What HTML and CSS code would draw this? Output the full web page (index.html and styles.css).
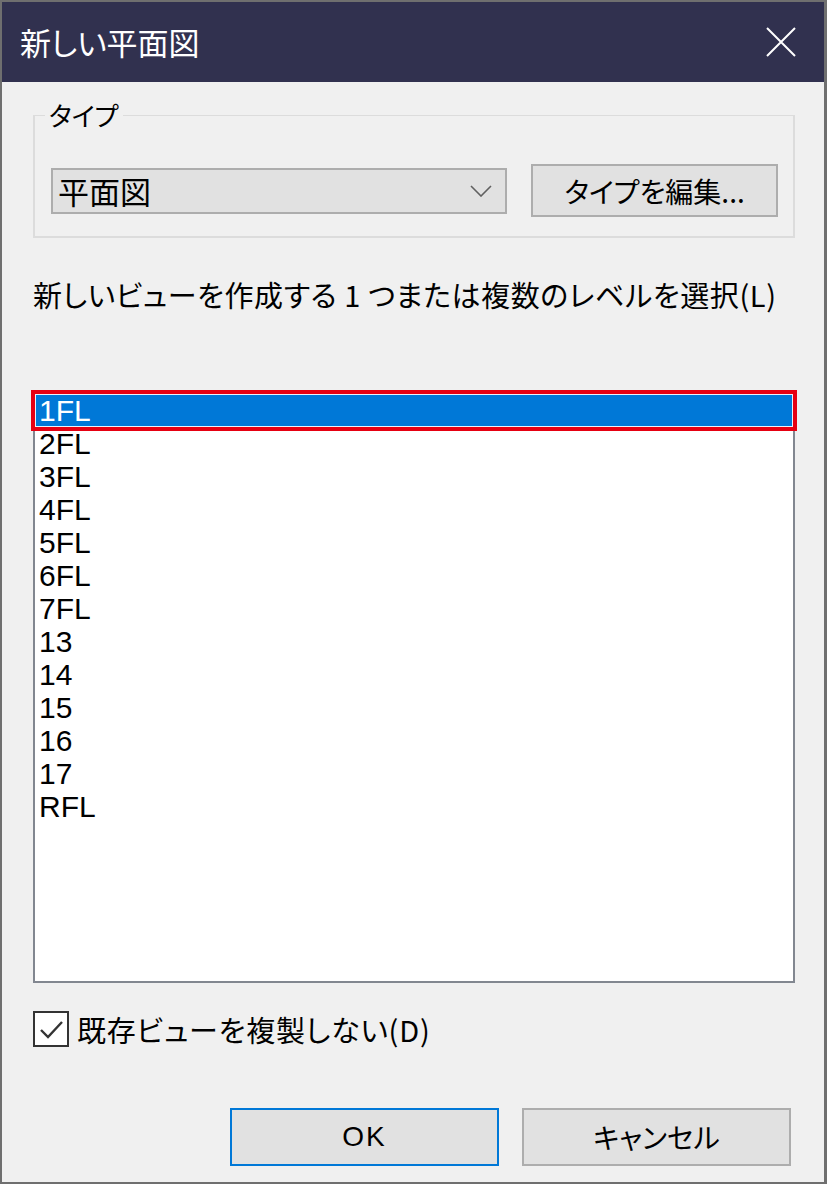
FILE: index.html
```html
<!DOCTYPE html>
<html lang="ja">
<head>
<meta charset="utf-8">
<title>新しい平面図</title>
<link rel="stylesheet" href="styles.css">
</head>
<body>
<div class="window">
  <div class="titlebar">
    <span class="title">新しい平面図</span>
    <svg class="close" width="30" height="30" viewBox="0 0 30 30"><path d="M1 1 L29 29 M29 1 L1 29" stroke="#ffffff" stroke-width="2" fill="none"/></svg>
  </div>
  <div class="content">
    <fieldset class="group">
      <legend class="legend">タイプ</legend>
      <div class="type-row">
        <div class="combo">
          <span class="combo-text">平面図</span>
          <svg class="chevron" width="22" height="12" viewBox="0 0 22 12"><path d="M1 1 L11 11 L21 1" stroke="#606060" stroke-width="1.6" fill="none"/></svg>
        </div>
        <div class="btn edit-btn">タイプを編集...</div>
      </div>
    </fieldset>
    <div class="label">新しいビューを作成する 1 つまたは複数のレベルを選択(L)</div>
    <div class="list">
      <div class="item selected">1FL</div>
      <div class="item">2FL</div>
      <div class="item">3FL</div>
      <div class="item">4FL</div>
      <div class="item">5FL</div>
      <div class="item">6FL</div>
      <div class="item">7FL</div>
      <div class="item">13</div>
      <div class="item">14</div>
      <div class="item">15</div>
      <div class="item">16</div>
      <div class="item">17</div>
      <div class="item">RFL</div>
    </div>
    <div class="check-row">
      <div class="checkbox">
        <svg width="32" height="32" viewBox="0 0 32 32"><path d="M6 17 L13 24 L27 9" stroke="#333333" stroke-width="2.4" fill="none"/></svg>
      </div>
      <span class="check-label">既存ビューを複製しない(D)</span>
    </div>
    <div class="buttons">
      <div class="btn action ok">OK</div>
      <div class="btn action">キャンセル</div>
    </div>
  </div>
</div>
</body>
</html>
```

FILE: styles.css
```css
html, body {
  margin: 0;
  padding: 0;
  background: #f0f0f0;
}
body {
  font-family: "Noto Sans CJK JP", "Liberation Sans", sans-serif;
  font-feature-settings: "palt";
  color: #000;
}
.window {
  width: 827px;
  height: 1184px;
  box-sizing: border-box;
  border: 2px solid #6f6f6f;
  border-right-width: 3px;
  background: #f0f0f0;
  display: flex;
  flex-direction: column;
}
.titlebar {
  height: 80px;
  flex: none;
  background: #31314f;
  display: flex;
  align-items: center;
  justify-content: space-between;
  padding: 0 28px 0 18px;
  color: #ffffff;
}
.title {
  font-size: 31px;
  line-height: 40px;
}
.close {
  display: block;
}
.content {
  padding: 0 29px 0 31px;
  display: flex;
  flex-direction: column;
}
.group {
  margin: 16px 0 0 0;
  padding: 0 15px 19px 16px;
  border: 2px solid #dcdcdc;
  border-top-width: 1px;
  min-width: 0;
}
.legend {
  margin-left: -6px;
  padding: 0 4px;
  font-size: 26px;
  line-height: 34px;
}
.type-row {
  margin-top: 32px;
  display: flex;
  align-items: center;
  gap: 24px;
}
.combo {
  width: 457px;
  height: 46px;
  box-sizing: border-box;
  border: 2px solid #adadad;
  background: #e1e1e1;
  display: flex;
  align-items: center;
  justify-content: space-between;
  padding: 0 13px 0 5px;
}
.combo-text {
  font-size: 31px;
  line-height: 40px;
}
.chevron {
  display: block;
}
.btn {
  box-sizing: border-box;
  border: 2px solid #adadad;
  background: #e1e1e1;
  display: flex;
  align-items: center;
  justify-content: center;
  font-size: 28px;
}
.edit-btn {
  width: 247px;
  height: 53px;
}
.label {
  margin-top: 36px;
  font-size: 29px;
  letter-spacing: 0.6px;
  line-height: 40px;
  white-space: nowrap;
}
.list {
  margin-top: 76px;
  height: 593px;
  box-sizing: border-box;
  border: 2px solid #828790;
  background: #ffffff;
  padding-top: 2px;
}
.item {
  height: 33px;
  line-height: 33px;
  padding-left: 4px;
  font-family: "Liberation Sans", "Noto Sans CJK JP", sans-serif;
  font-size: 30px;
  box-sizing: border-box;
}
.item.selected {
  background: #0078d7;
  color: #ffffff;
  border: 1px solid #e8f2fb;
  padding-left: 3px;
  line-height: 31px;
  outline: 4px solid #e60012;
  outline-offset: 0;
}
.check-row {
  margin-top: 26px;
  display: flex;
  align-items: center;
  gap: 8px;
}
.checkbox {
  width: 36px;
  height: 36px;
  box-sizing: border-box;
  border: 2px solid #333333;
  background: #ffffff;
  display: flex;
  align-items: center;
  justify-content: center;
}
.check-label {
  font-size: 29px;
  letter-spacing: 0.8px;
  line-height: 40px;
}
.buttons {
  margin-top: 59px;
  padding-right: 4px;
  display: flex;
  justify-content: flex-end;
  gap: 23px;
}
.action {
  width: 269px;
  height: 58px;
}
.ok {
  border-color: #0078d7;
  font-family: "Liberation Sans", sans-serif;
  letter-spacing: 2px;
}
```
